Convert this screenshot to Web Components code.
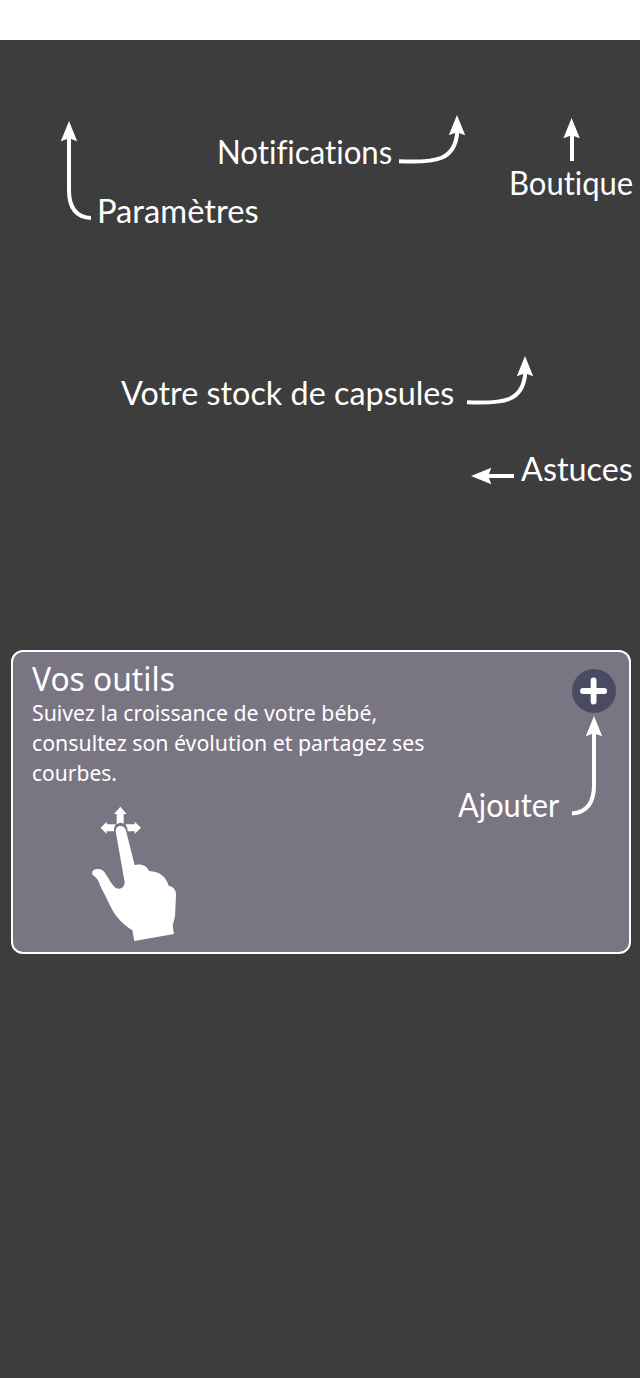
<!DOCTYPE html>
<html lang="fr">
<head>
<meta charset="utf-8">
<title>Guide</title>
<style>
html,body{margin:0;background:#3d3d3d}
</style>
</head>
<body>
<guide-page></guide-page>
<script>
// Text line that stretches to a given width.
customElements.define('fit-text', class extends HTMLElement {
  connectedCallback() {
    const root = this.attachShadow({mode: 'open'});
    root.innerHTML = `<style>
      :host{display:block;white-space:nowrap;flex:none;color:#fff;
        font:400 33.5px/40px Lato,"Noto Sans",sans-serif;font-variant-ligatures:none}
      :host([kind=title]){font:400 33.5px/34px "Noto Sans",sans-serif}
      :host([kind=body]){font:400 22.5px/30px "Noto Sans",sans-serif}
      span{display:inline-block;transform-origin:0 50%}
    </style><span><slot></slot></span>`;
    const w = +this.getAttribute('width');
    this.style.width = w + 'px';
    const s = root.querySelector('span');
    s.style.transform = `scaleX(${w / s.offsetWidth})`;
  }
});

const arrows = {
  settings: [32, 100, 'M9 16V69Q9 96 31 97', 9, 0, 0],
  swoop: [68, 50, 'M1 46.2C39 48 57 45 59.3 17', 59, 0, 0],
  up: [18, 43, 'M10 16V43', 9.6, 0, 0],
  left: [43, 18, 'M16 9H43', 0, 9, -90],
  add: [32, 101, 'M24 16V69Q24 96 2 97.5', 24, 0, 0]
};
customElements.define('hint-arrow', class extends HTMLElement {
  connectedCallback() {
    const [w, h, d, x, y, r] = arrows[this.getAttribute('kind')];
    this.attachShadow({mode: 'open'}).innerHTML = `<style>
      :host{display:block;flex:none} svg{display:block;overflow:visible}
    </style><svg width="${w}" height="${h}"><path d="${d}" fill="none" stroke="#fff" stroke-width="4"/>
    <path d="M0 0L8.2 20.3L0 17.2L-8.2 20.3Z" fill="#fff" transform="translate(${x} ${y}) rotate(${r})"/></svg>`;
  }
});

customElements.define('swipe-hand', class extends HTMLElement {
  connectedCallback() {
    this.attachShadow({mode: 'open'}).innerHTML = `<style>
      :host{display:block} svg{display:block}
    </style><svg width="110" height="150" viewBox="0 0 330 450" fill="#fff">
      <path d="M121 20L140 42H131V71Q120 65 110 73V42H102Z"/>
      <path d="M62 83L80 65V73H107Q101 82 102 94H80V102Z"/>
      <path d="M183 83L164 65V73H136Q143 82 143 94H164V102Z"/>
      <path d="M107 94C107 74 134 73 138 92L164 195C182 190 201 196 207 213C240 215 258 230 266 257C282 260 288 271 288 285L285 350L278 376L282 402L163 423L157 391C132 375 108 352 94 324L60 256Q56 236 38 225C30 207 58 202 70 213C84 229 94 254 106 263C119 271 133 264 134 247Z"/>
    </svg>`;
  }
});

customElements.define('add-button', class extends HTMLElement {
  connectedCallback() {
    this.attachShadow({mode: 'open'}).innerHTML = `<style>
      :host{display:block;width:44px;height:44px;border-radius:50%;background:#4b4a63}
      svg{display:block}
    </style><svg width="44" height="44"><path d="M21.6 11.4V32.6M11 22H32.2" stroke="#fff" stroke-width="5.8" stroke-linecap="round"/></svg>`;
  }
});

customElements.define('tools-card', class extends HTMLElement {
  connectedCallback() {
    this.attachShadow({mode: 'open'}).innerHTML = `<style>
      :host{display:flex;box-sizing:border-box;height:304px;margin:0 9px 0 11px;border:2px solid #fff;
        border-radius:12px;background:#7a7582;justify-content:space-between}
      .text{padding:9px 0 0 19px}
      .lines{margin-top:3px}
      swipe-hand{margin:12px 0 0 48px}
      .side{padding:17px 13px 0 0;display:flex;flex-direction:column;align-items:flex-end}
      .hint{display:flex;margin:3px 14px 0 0}
      .hint fit-text{margin:68px 11px 0 0}
    </style>
    <div class="text">
      <fit-text kind="title" width="143">Vos outils</fit-text>
      <div class="lines">
      <fit-text kind="body" width="345">Suivez la croissance de votre bébé,</fit-text>
      <fit-text kind="body" width="392">consultez son évolution et partagez ses</fit-text>
      <fit-text kind="body" width="85">courbes.</fit-text>
      </div>
      <swipe-hand></swipe-hand>
    </div>
    <div class="side">
      <add-button></add-button>
      <div class="hint"><fit-text width="101">Ajouter</fit-text><hint-arrow kind="add"></hint-arrow></div>
    </div>`;
  }
});

customElements.define('guide-page', class extends HTMLElement {
  connectedCallback() {
    this.attachShadow({mode: 'open'}).innerHTML = `<style>
      :host{display:block;width:640px;height:1378px;background:#3d3d3d;overflow:hidden}
      header{height:40px;background:#fff}
      .row{display:flex;align-items:flex-start}
      .top{padding-top:75px;height:115px}
      .settings{margin:6px 0 0 60px}
      .settings fit-text{margin:69px 0 0 5px}
      .news{margin-left:-42px}
      .news fit-text,.stock fit-text{margin-top:16px}
      .news hint-arrow{margin-left:6px}
      .shop{margin:3px 0 0 43px;display:flex;flex-direction:column;align-items:center}
      .shop fit-text{margin-top:1px}
      .stock{height:56px;margin:126px 0 0 121px}
      .stock hint-arrow{margin-left:12px}
      .tips{height:40px;margin:36px 0 162px 471px}
      .tips hint-arrow{margin:19px 7px 0 0}
    </style>
    <header></header>
    <div class="row top">
      <div class="row settings"><hint-arrow kind="settings"></hint-arrow><fit-text width="162">Paramètres</fit-text></div>
      <div class="row news"><fit-text width="175">Notifications</fit-text><hint-arrow kind="swoop"></hint-arrow></div>
      <div class="shop"><hint-arrow kind="up"></hint-arrow><fit-text width="124">Boutique</fit-text></div>
    </div>
    <div class="row stock"><fit-text width="333">Votre stock de capsules</fit-text><hint-arrow kind="swoop"></hint-arrow></div>
    <div class="row tips"><hint-arrow kind="left"></hint-arrow><fit-text width="112">Astuces</fit-text></div>
    <tools-card></tools-card>`;
  }
});
</script>
</body>
</html>
